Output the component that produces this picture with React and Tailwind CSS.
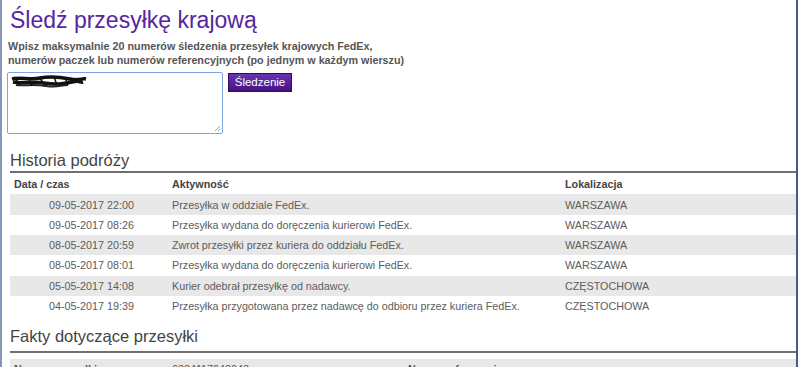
import React from "react";

const rows = [
  ["09-05-2017 22:00", "Przesyłka w oddziale FedEx.", "WARSZAWA"],
  ["09-05-2017 08:26", "Przesyłka wydana do doręczenia kurierowi FedEx.", "WARSZAWA"],
  ["08-05-2017 20:59", "Zwrot przesyłki przez kuriera do oddziału FedEx.", "WARSZAWA"],
  ["08-05-2017 08:01", "Przesyłka wydana do doręczenia kurierowi FedEx.", "WARSZAWA"],
  ["05-05-2017 14:08", "Kurier odebrał przesyłkę od nadawcy.", "CZĘSTOCHOWA"],
  ["04-05-2017 19:39", "Przesyłka przygotowana przez nadawcę do odbioru przez kuriera FedEx.", "CZĘSTOCHOWA"],
];

function Scribble() {
  return (
    <svg width="80" height="14" viewBox="0 0 80 14" className="block">
      <path d="M2 4 C10 2 20 5 30 3 S50 2 60 4 S72 3 76 4" stroke="#111" strokeWidth="3.5" fill="none" />
      <path d="M3 7 C12 9 22 6 34 8 S52 9 62 7 S70 8 73 7" stroke="#111" strokeWidth="3.5" fill="none" />
      <path d="M6 10 C14 11 24 9 36 11 S50 10 58 10" stroke="#222" strokeWidth="2" fill="none" />
      <path d="M4 2 L10 10 M18 2 L22 11 M30 3 L35 11 M44 2 L47 10 M55 2 L58 10 M66 3 L70 8" stroke="#111" strokeWidth="1.5" fill="none" />
    </svg>
  );
}

export default function App() {
  return (
    <div
      className="w-[800px] h-[367px] overflow-hidden flex bg-white"
      style={{ fontFamily: '"Liberation Sans", Arial, sans-serif' }}
    >
      <div className="w-[2px] shrink-0 bg-[#8797ba]" />
      <div className="flex-1 min-w-0 pl-[8px] overflow-hidden">
        <div className="pt-[7px] text-[23px] leading-[26px] text-[#5526a0]">Śledź przesyłkę krajową</div>
        <div className="mt-[5.6px] -ml-[2px] text-[10.75px] leading-[14px] font-bold text-[#555]">
          <div>Wpisz maksymalnie 20 numerów śledzenia przesyłek krajowych FedEx,</div>
          <div>numerów paczek lub numerów referencyjnych (po jednym w każdym wierszu)</div>
        </div>
        <div className="mt-[5.4px] -ml-[3px] flex items-start gap-[5px]">
          <div className="relative w-[216px] h-[62px] shrink-0 border border-[#7fa5dd] rounded-[2px] bg-white pl-[2px] pt-[2px]">
            <Scribble />
            <svg width="8" height="8" viewBox="0 0 8 8" className="absolute right-[1px] bottom-[1px]">
              <path d="M7 2 L2 7 M7 5 L5 7" stroke="#999" strokeWidth="1" />
            </svg>
          </div>
          <div className="mt-[1px] w-[64px] h-[19px] shrink-0 flex items-center justify-center bg-gradient-to-b from-[#6a35b2] to-[#45137f] border border-[#2f0c5e] text-white text-[11.5px] leading-none">
            Śledzenie
          </div>
        </div>

        <div className="mt-[16px] text-[16.5px] leading-[20px] text-[#444]">Historia podróży</div>
        <div className="mt-[1.5px] h-[2px] bg-[#6f6f6f]" />
        <div className="flex h-[21px] items-center text-[10.75px] font-bold text-[#444]">
          <div className="w-[158px] pl-[4px]">Data / czas</div>
          <div className="w-[393px] pl-[4px]">Aktywność</div>
          <div className="flex-1 pl-[4px]">Lokalizacja</div>
        </div>
        {rows.map((r, i) => (
          <div
            key={i}
            className={`flex h-[20.3px] items-center text-[10.75px] text-[#5c5c5c] ${i % 2 === 0 ? "bg-[#e8e8e8]" : "bg-white"}`}
          >
            <div className="w-[158px] pl-[39px]">{r[0]}</div>
            <div className="w-[393px] pl-[4px]">{r[1]}</div>
            <div className="flex-1 pl-[4px]">{r[2]}</div>
          </div>
        ))}

        <div className="mt-[9.5px] text-[16.5px] leading-[20px] text-[#444]">Fakty dotyczące przesyłki</div>
        <div className="mt-[5px] h-[2px] bg-[#6f6f6f]" />
        <div className="mt-[6px] flex h-[20px] items-center bg-[#e8e8e8] text-[10.75px] text-[#555]">
          <div className="w-[158px] pl-[4px] font-bold">Numer przesyłki</div>
          <div className="w-[236px] pl-[4px]">6334117943643</div>
          <div className="flex-1 pl-[4px] font-bold">Numer referencyjny</div>
        </div>
      </div>
      <div className="w-[2px] shrink-0 bg-[#3f5d8f]" />
      <div className="w-[2px] shrink-0 bg-white" />
    </div>
  );
}
